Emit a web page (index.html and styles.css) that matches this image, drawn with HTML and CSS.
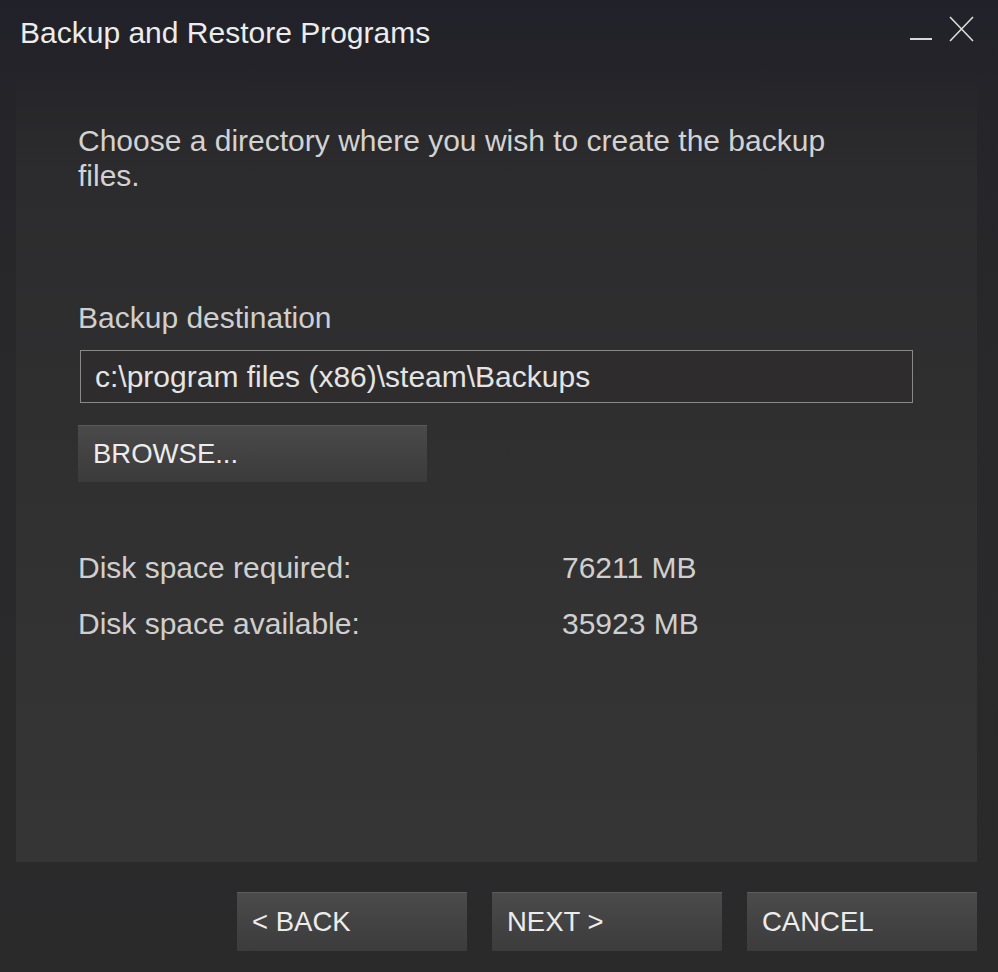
FILE: index.html
```html
<!DOCTYPE html>
<html>
<head>
<meta charset="utf-8">
<link rel="stylesheet" href="styles.css">
</head>
<body>
<div class="window">
  <div class="titlebar">
    <div class="title">Backup and Restore Programs</div>
    <div class="controls">
      <svg class="min" width="22" height="24" viewBox="0 0 22 24"><line x1="0" y1="22" x2="22" y2="22" stroke="#d8d8d8" stroke-width="2"/></svg>
      <svg class="close" width="25" height="26" viewBox="0 0 25 26"><path d="M1 1 L24 25 M24 1 L1 25" stroke="#dcdcdc" stroke-width="1.6" fill="none"/></svg>
    </div>
  </div>
  <div class="panel">
    <p class="intro">Choose a directory where you wish to create the backup files.</p>
    <div class="label">Backup destination</div>
    <div class="input">c:\program files (x86)\steam\Backups</div>
    <div class="browse">BROWSE...</div>
    <div class="stats">
      <div class="row"><span class="k">Disk space required:</span><span class="v">76211 MB</span></div>
      <div class="row"><span class="k">Disk space available:</span><span class="v">35923 MB</span></div>
    </div>
  </div>
  <div class="footer">
    <div class="btn">&lt; BACK</div>
    <div class="btn">NEXT &gt;</div>
    <div class="btn">CANCEL</div>
  </div>
</div>
</body>
</html>
```
FILE: styles.css
```css
html, body {
  margin: 0;
  padding: 0;
}
body {
  width: 998px;
  height: 972px;
  overflow: hidden;
  font-family: "Liberation Sans", Arial, sans-serif;
  background: linear-gradient(180deg, #212129 0px, #252429 90px, #29282a 400px, #2b2a2b 972px);
}
.window {
  height: 972px;
  display: flex;
  flex-direction: column;
}
.titlebar {
  height: 68px;
  display: flex;
  align-items: flex-start;
  justify-content: space-between;
  padding: 0 24px 0 20px;
}
.title {
  color: #ececec;
  font-size: 30px;
  line-height: 30px;
  margin-top: 18px;
}
.controls {
  display: flex;
  align-items: flex-start;
  gap: 17px;
  margin-top: 16px;
}
.min { margin-top: 1px; }
.panel {
  margin: 0 21px 0 16px;
  height: 794px;
  background: linear-gradient(180deg, rgba(44,43,45,0) 0px, #2c2b2d 110px, #302f30 350px, #343334 600px, #363536 794px);
  padding: 0 0 0 62px;
  box-sizing: border-box;
  color: #d0d0d0;
}
.intro {
  margin: 55px 0 0 0;
  width: 770px;
  font-size: 30px;
  line-height: 35px;
  color: #d2d2d2;
}
.label {
  margin-top: 109px;
  font-size: 30px;
  line-height: 32px;
  color: #cfcfcf;
}
.input {
  margin: 16px 0 0 2px;
  width: 833px;
  height: 53px;
  box-sizing: border-box;
  border: 1px solid #8a8989;
  background: #2e2c2d;
  color: #e4e4e4;
  font-size: 30px;
  line-height: 51px;
  padding-left: 14px;
}
.browse {
  margin-top: 22px;
  width: 349px;
  height: 57px;
  box-sizing: border-box;
  background: linear-gradient(180deg, #4b4a4b 0%, #434243 50%, #3c3b3c 100%);
  border-top: 1px solid #5a595a;
  color: #ececec;
  font-size: 27.5px;
  line-height: 56px;
  padding-left: 15px;
}
.stats {
  margin-top: 70px;
  display: flex;
  flex-direction: column;
  gap: 24px;
}
.row {
  display: flex;
  font-size: 30px;
  line-height: 32px;
  color: #cfcfcf;
}
.k { width: 484px; }
.footer {
  display: flex;
  justify-content: flex-end;
  gap: 25px;
  margin: 30px 21px 0 0;
}
.btn {
  width: 230px;
  height: 59px;
  box-sizing: border-box;
  background: linear-gradient(180deg, #4c4b4c 0%, #444344 50%, #3d3c3d 100%);
  border-top: 1px solid #5c5b5c;
  color: #ececec;
  font-size: 27.5px;
  line-height: 58px;
  padding-left: 15px;
}
```
